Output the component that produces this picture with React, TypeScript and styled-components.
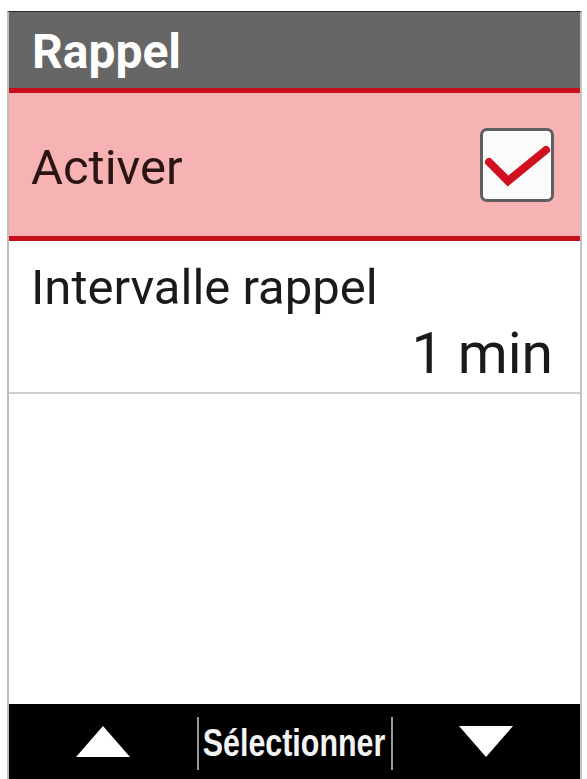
import styled, { createGlobalStyle } from "styled-components";

const GlobalStyle = createGlobalStyle`
  html, body {
    margin: 0;
    padding: 0;
    background: #ffffff;
    overflow: hidden;
  }
  body {
    font-family: Roboto, "Liberation Sans", Arial, sans-serif;
  }
`;

const ACCENT = "#c8101c";

const Screen = styled.div`
  width: 587px;
  height: 779px;
  padding: 11px 5px 0 7px;
  box-sizing: border-box;
  display: flex;
`;

const Frame = styled.div`
  flex: 1;
  display: flex;
  flex-direction: column;
  border-left: 2px solid #bdbdbd;
  border-right: 2px solid #c4c4c4;
  border-top: 1px solid #2b2b2b;
  background: #ffffff;
`;

const TitleBar = styled.div`
  height: 76px;
  background: #666666;
  color: #ffffff;
  font-weight: 700;
  font-size: 48px;
  display: flex;
  align-items: center;
  padding-left: 23px;
  padding-top: 2px;
  box-sizing: border-box;
`;

const Rule = styled.div`
  height: 5px;
  background: ${ACCENT};
`;

const Row = styled.div<{ $selected?: boolean; $height: number }>`
  height: ${({ $height }) => $height}px;
  background: ${({ $selected }) => ($selected ? "#f7b2b4" : "#ffffff")};
  box-sizing: border-box;
  padding: 0 26px 0 22px;
  color: #1a1a1a;
  font-size: 49px;
`;

const ToggleRow = styled(Row)`
  display: flex;
  align-items: center;
  justify-content: space-between;
  color: #2a1414;
  padding-top: 6px;
`;

const ValueRow = styled(Row)`
  display: flex;
  flex-direction: column;
  padding-top: 20px;
  border-bottom: 2px solid #cfcfcf;
`;

const Label = styled.div`
  line-height: 1.1;
`;

const Value = styled.div`
  align-self: flex-end;
  font-size: 57px;
  line-height: 1;
  margin-top: 10px;
  margin-right: 1px;
`;

const Checkbox = styled.div`
  width: 74px;
  height: 74px;
  margin-top: -6px;
  box-sizing: border-box;
  border: 3px solid #5f5f5f;
  border-radius: 7px;
  background: #fbfbfb;
  display: flex;
  align-items: center;
  justify-content: center;
`;

const Filler = styled.div`
  flex: 1;
  background: #ffffff;
`;

const SoftKeys = styled.div`
  height: 75px;
  background: #000000;
  display: grid;
  grid-template-columns: 1fr 196px 1fr;
  align-items: center;
`;

const KeySlot = styled.div`
  display: flex;
  justify-content: center;
  align-items: center;
  height: 100%;
`;

const CenterKey = styled.div`
  height: 53px;
  margin-top: 4px;
  box-sizing: border-box;
  border-left: 2px solid #9a9a9a;
  border-right: 2px solid #9a9a9a;
  display: flex;
  align-items: center;
  justify-content: center;
  color: #f4f4f4;
  font-family: "Liberation Sans", Arial, sans-serif;
  font-weight: 700;
  font-size: 38px;
`;

const Narrow = styled.span`
  display: inline-block;
  transform: scaleX(0.8);
  white-space: nowrap;
`;

const Arrow = ({ up }: { up?: boolean }) => (
  <svg width="56" height="33" viewBox="0 0 56 33">
    <polygon
      points={up ? "28,1 55,32 1,32" : "1,1 55,1 28,32"}
      fill="#ffffff"
    />
  </svg>
);

const CheckMark = () => (
  <svg width="68" height="68" viewBox="0 0 68 68">
    <polyline
      points="6,31 25,50 63,19"
      fill="none"
      stroke="#d0101e"
      strokeWidth="8"
      strokeLinecap="round"
      strokeLinejoin="miter"
    />
  </svg>
);

export default function App() {
  return (
    <Screen>
      <GlobalStyle />
      <Frame>
        <TitleBar>Rappel</TitleBar>
        <Rule />
        <ToggleRow $selected $height={143}>
          <span>Activer</span>
          <Checkbox>
            <CheckMark />
          </Checkbox>
        </ToggleRow>
        <Rule />
        <ValueRow $height={153}>
          <Label>Intervalle rappel</Label>
          <Value>1 min</Value>
        </ValueRow>
        <Filler />
        <SoftKeys>
          <KeySlot>
            <Arrow up />
          </KeySlot>
          <CenterKey>
            <Narrow>Sélectionner</Narrow>
          </CenterKey>
          <KeySlot>
            <Arrow />
          </KeySlot>
        </SoftKeys>
      </Frame>
    </Screen>
  );
}
